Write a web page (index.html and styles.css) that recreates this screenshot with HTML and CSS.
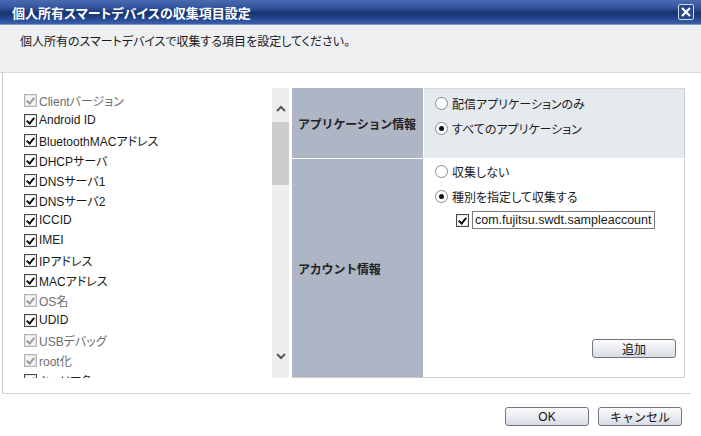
FILE: index.html
```html
<!DOCTYPE html>
<html lang="ja">
<head>
    <meta charset="UTF-8">
    <meta name="viewport" content="width=device-width, initial-scale=1.0">
    <title>個人所有スマートデバイスの収集項目設定</title>
    <link rel="stylesheet" href="styles.css">
</head>
<body>
    <div class="dialog">
        <!-- Title Bar -->
        <div class="title-bar">
            <span class="title">個人所有スマートデバイスの収集項目設定</span>
            <span class="close-button">
                <svg width="10" height="10" viewBox="0 0 10 10"><path d="M1 1 L9 9 M9 1 L1 9" stroke="#fff" stroke-width="2.2"/></svg>
            </span>
        </div>

        <div class="intro">個人所有のスマートデバイスで収集する項目を設定してください。</div>

        <div class="content">
            <!-- Collected items (scroll list) -->
            <div class="item-panel">
                <ul class="item-list">
                    <li class="item disabled"><span class="check checked"></span>Clientバージョン</li>
                    <li class="item"><span class="check checked"></span>Android ID</li>
                    <li class="item"><span class="check checked"></span>BluetoothMACアドレス</li>
                    <li class="item"><span class="check checked"></span>DHCPサーバ</li>
                    <li class="item"><span class="check checked"></span>DNSサーバ1</li>
                    <li class="item"><span class="check checked"></span>DNSサーバ2</li>
                    <li class="item"><span class="check checked"></span>ICCID</li>
                    <li class="item"><span class="check checked"></span>IMEI</li>
                    <li class="item"><span class="check checked"></span>IPアドレス</li>
                    <li class="item"><span class="check checked"></span>MACアドレス</li>
                    <li class="item disabled"><span class="check checked"></span>OS名</li>
                    <li class="item"><span class="check checked"></span>UDID</li>
                    <li class="item disabled"><span class="check checked"></span>USBデバッグ</li>
                    <li class="item disabled"><span class="check checked"></span>root化</li>
                    <li class="item"><span class="check checked"></span>キャリア名</li>
                </ul>
                <div class="scrollbar">
                    <div class="scroll-arrow up">
                        <svg width="10" height="7" viewBox="0 0 10 7"><path d="M1 6 L5 2 L9 6" fill="none" stroke="#555" stroke-width="2"/></svg>
                    </div>
                    <div class="scroll-track"><div class="scroll-thumb"></div></div>
                    <div class="scroll-arrow down">
                        <svg width="10" height="7" viewBox="0 0 10 7"><path d="M1 1 L5 5 L9 1" fill="none" stroke="#555" stroke-width="2"/></svg>
                    </div>
                </div>
            </div>

            <!-- Settings table -->
            <div class="settings">
                <div class="setting-row app-row">
                    <div class="setting-label">アプリケーション情報</div>
                    <div class="setting-value">
                        <div class="option"><span class="radio"></span>配信アプリケーションのみ</div>
                        <div class="option"><span class="radio selected"></span>すべてのアプリケーション</div>
                    </div>
                </div>
                <div class="setting-row account-row">
                    <div class="setting-label">アカウント情報</div>
                    <div class="setting-value">
                        <div class="option"><span class="radio"></span>収集しない</div>
                        <div class="option"><span class="radio selected"></span>種別を指定して収集する</div>
                        <div class="account-entry">
                            <span class="check checked"></span>
                            <span class="text-box">com.fujitsu.swdt.sampleaccount</span>
                        </div>
                        <button class="button add-button">追加</button>
                    </div>
                </div>
            </div>
        </div>

        <!-- Footer buttons -->
        <div class="footer">
            <button class="button">OK</button>
            <button class="button">キャンセル</button>
        </div>
    </div>
</body>
</html>
```

FILE: styles.css
```css
/* Color Palette */
:root {
    --title-dark: #14336f;
    --title-light: #3d60aa;
    --panel-bg: #eeeff1;
    --label-bg: #aeb5c5;
    --value-bg: #e5eaee;
    --border-gray: #cccccc;
    --text-color: #1a1a1a;
}

body {
    margin: 0;
    font-family: "Liberation Sans", "Noto Sans CJK JP", sans-serif;
    font-size: 12px;
    font-feature-settings: "palt";
    color: var(--text-color);
    background: #ffffff;
}

.dialog {
    width: 701px;
    height: 436px;
    display: flex;
    flex-direction: column;
}

/* Title Bar */
.title-bar {
    height: 24px;
    display: flex;
    align-items: center;
    justify-content: space-between;
    padding: 0 7px 0 12px;
    background: linear-gradient(#4a6bb1 0%, #35569f 30%, var(--title-dark) 55%, #284a95 80%, var(--title-light) 100%);
    border-bottom: 1px solid #7a96cc;
}

.title {
    color: #ffffff;
    font-weight: bold;
    font-size: 13px;
}

.close-button {
    width: 14px;
    height: 14px;
    border: 1px solid #d0daee;
    border-radius: 2px;
    display: flex;
    align-items: center;
    justify-content: center;
    background: #29478a;
}

/* Intro */
.intro {
    height: 38px;
    padding: 9px 0 0 20px;
    background: var(--panel-bg);
    border-bottom: 1px solid #d8d8dc;
    line-height: 16px;
}

/* Main content */
.content {
    height: 290px;
    display: flex;
    gap: 3px;
    padding: 15px 0 15px 0;
    margin-left: 2px;
    border-left: 1px solid var(--border-gray);
    border-bottom: 1px solid #d0d3d8;
    margin-right: 10px;
}

.item-panel {
    width: 286px;
    display: flex;
}

.item-list {
    flex: 1;
    margin: 0;
    padding: 2px 0 0 21px;
    list-style: none;
    overflow: hidden;
}

.item {
    height: 20px;
    display: flex;
    align-items: center;
    gap: 2px;
    white-space: nowrap;
}

.item.disabled {
    color: #6d6d6d;
}

/* Checkboxes */
.check {
    width: 11px;
    height: 11px;
    border: 1px solid #4a4a4a;
    box-shadow: inset 0 0 0 1px #e2e2e2;
    background: #ffffff;
    position: relative;
    flex-shrink: 0;
}

.check.checked::after {
    content: "";
    position: absolute;
    left: 3px;
    top: 1px;
    width: 3px;
    height: 6px;
    border-right: 2px solid #111111;
    border-bottom: 2px solid #111111;
    transform: rotate(40deg);
}

.disabled .check {
    border-color: #b4b4b4;
    background: #f4f4f4;
}

.disabled .check.checked::after {
    border-color: #9a9a9a;
}

/* Scrollbar */
.scrollbar {
    width: 17px;
    background: #eeeeee;
    display: flex;
    flex-direction: column;
}

.scroll-arrow {
    display: flex;
    justify-content: center;
}

.scroll-arrow.up {
    align-items: flex-end;
    padding-bottom: 10px;
    height: 24px;
}

.scroll-arrow.down {
    align-items: flex-start;
    padding-top: 9px;
    height: 25px;
}

.scroll-track {
    flex: 1;
}

.scroll-thumb {
    height: 63px;
    background: #cdcdcd;
}

/* Settings table */
.settings {
    width: 393px;
    display: flex;
    flex-direction: column;
}

.setting-row {
    display: flex;
}

.app-row {
    height: 70px;
    border-bottom: 1px solid #ffffff;
}

.account-row {
    flex: 1;
    border-bottom: 1px solid var(--border-gray);
}

.setting-label {
    width: 125px;
    padding-left: 6px;
    display: flex;
    align-items: center;
    background: var(--label-bg);
    border-right: 1px solid #ffffff;
    font-weight: bold;
    font-feature-settings: normal;
    letter-spacing: -0.2px;
    color: #222222;
}

.setting-value {
    flex: 1;
    display: flex;
    flex-direction: column;
    padding-left: 11px;
    border-right: 1px solid var(--border-gray);
}

.app-row .setting-value {
    background: var(--value-bg);
    border-top: 1px solid #d6dadf;
    padding-top: 2px;
}

.option {
    height: 25px;
    display: flex;
    align-items: center;
    gap: 4px;
}

/* Radio buttons */
.radio {
    width: 11px;
    height: 11px;
    border: 1px solid #8a8a8a;
    border-radius: 50%;
    background: #ffffff;
    position: relative;
}

.radio.selected::after {
    content: "";
    position: absolute;
    left: 3px;
    top: 3px;
    width: 5px;
    height: 5px;
    border-radius: 50%;
    background: #111111;
}

.account-entry {
    display: flex;
    align-items: center;
    gap: 3px;
    margin: 2px 0 0 21px;
}

.text-box {
    width: 179px;
    height: 16px;
    border: 1px solid #777777;
    padding-left: 2px;
    font-size: 12.5px;
    line-height: 16px;
    background: #ffffff;
}

/* Buttons */
.button {
    width: 84px;
    height: 19px;
    padding: 0;
    font-family: inherit;
    font-size: 12px;
    color: #111111;
    border: 1px solid #70757f;
    border-radius: 3px;
    background: linear-gradient(#fbfbfc, #e6e9ee 60%, #d5dae3);
}

.add-button {
    align-self: flex-end;
    margin: auto 8px 19px 0;
}

.footer {
    display: flex;
    justify-content: flex-end;
    gap: 9px;
    padding: 13px 19px 0 0;
}
```
